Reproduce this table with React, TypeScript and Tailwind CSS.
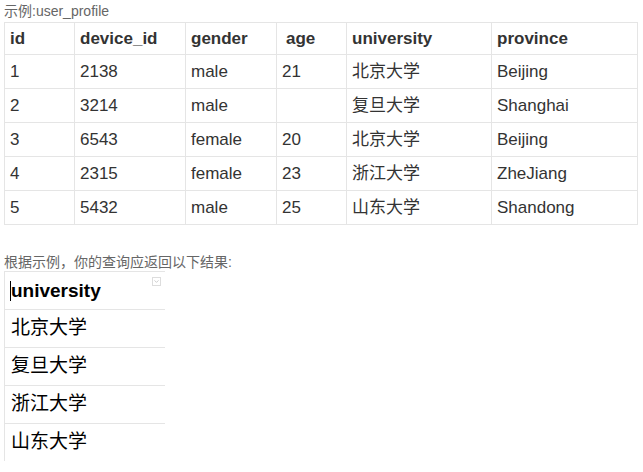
import { ChevronDown } from 'lucide-react'

const rows = [
  { id: '1', device: '2138', gender: 'male', age: '21', uni: '北京大学', prov: 'Beijing' },
  { id: '2', device: '3214', gender: 'male', age: '', uni: '复旦大学', prov: 'Shanghai' },
  { id: '3', device: '6543', gender: 'female', age: '20', uni: '北京大学', prov: 'Beijing' },
  { id: '4', device: '2315', gender: 'female', age: '23', uni: '浙江大学', prov: 'ZheJiang' },
  { id: '5', device: '5432', gender: 'male', age: '25', uni: '山东大学', prov: 'Shandong' },
]

const result = ['北京大学', '复旦大学', '浙江大学', '山东大学']

const font = "font-['Liberation_Sans','Noto_Sans_CJK_SC',sans-serif]"

export default function App() {
  const cell = 'border border-[#e5e5e5] px-[5px] text-left align-middle'
  return (
    <div className={`${font} bg-white w-[643px] h-[472px] overflow-hidden text-[#333]`}>
      <div className="pl-1 pt-[2px] text-[14px] leading-[18px] text-[#666]">示例:user_profile</div>

      <table className="ml-1 mt-[2px] border-collapse text-[17px]">
        <thead>
          <tr className="h-[32px]">
            <th className={`${cell} w-[70px] font-bold`}>id</th>
            <th className={`${cell} w-[111px] font-bold`}>device_id</th>
            <th className={`${cell} w-[91px] font-bold`}>gender</th>
            <th className={`${cell} w-[70px] font-bold pl-[9px]`}>age</th>
            <th className={`${cell} w-[145px] font-bold`}>university</th>
            <th className={`${cell} w-[146px] font-bold`}>province</th>
          </tr>
        </thead>
        <tbody>
          {rows.map((r) => (
            <tr key={r.id} className="h-[34px]">
              <td className={cell}>{r.id}</td>
              <td className={cell}>{r.device}</td>
              <td className={cell}>{r.gender}</td>
              <td className={cell}>{r.age}</td>
              <td className={cell}>{r.uni}</td>
              <td className={cell}>{r.prov}</td>
            </tr>
          ))}
        </tbody>
      </table>

      <div className="pl-1 mt-[28px] text-[14px] leading-[18px] text-[#666]">根据示例，你的查询应返回以下结果:</div>

      <div className="ml-1 w-[161px] border-l border-[#e5e5e5] text-[19px] text-black">
        <div className="relative h-[38px] border-t border-[#e5e5e5] flex items-center pl-[5px] font-bold">
          <span className="border-l border-black leading-[20px]">university</span>
          <span className="absolute right-[4px] top-[5px] w-[9px] h-[9px] border border-[#ddd] flex items-center justify-center">
            <ChevronDown className="w-[7px] h-[7px] text-[#aaa]" strokeWidth={2} />
          </span>
        </div>
        {result.map((u, i) => (
          <div key={i} className="h-[38px] border-t border-[#e5e5e5] flex items-center pl-[6px]">
            {u}
          </div>
        ))}
      </div>
    </div>
  )
}
